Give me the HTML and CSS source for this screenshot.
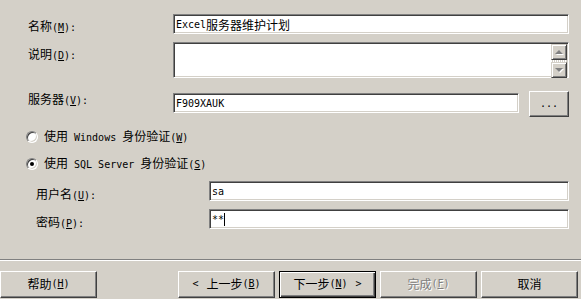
FILE: index.html
```html
<!DOCTYPE html>
<html>
<head>
<meta charset="utf-8">
<link rel="stylesheet" href="styles.css">
</head>
<body>
<div class="dlg">
  <div class="form">
    <div class="row r-name">
      <div class="lbl">名称<span class="m">(<u>M</u>):</span></div>
      <div class="field wide"><span class="m">Excel</span>服务器维护计划</div>
    </div>
    <div class="row r-desc">
      <div class="lbl">说明<span class="m">(<u>D</u>):</span></div>
      <div class="field wide area">
        <div class="sbar">
          <div class="sbtn"><span class="tri up"></span></div>
          <div class="strack"></div>
          <div class="sbtn"><span class="tri down"></span></div>
        </div>
      </div>
    </div>
    <div class="row r-server">
      <div class="lbl">服务器<span class="m">(<u>V</u>):</span></div>
      <div class="field server"><span class="m">F909XAUK</span></div>
      <div class="btn dots"><span class="m">...</span></div>
    </div>
    <div class="radio r-win">
      <span class="rb"></span>
      <span class="rtext">使用<span class="m"> Windows </span>身份验证<span class="m">(<u>W</u>)</span></span>
    </div>
    <div class="radio r-sql">
      <span class="rb on"></span>
      <span class="rtext">使用<span class="m"> SQL Server </span>身份验证<span class="m">(<u>S</u>)</span></span>
    </div>
    <div class="row sub r-user">
      <div class="lbl sublbl">用户名<span class="m">(<u>U</u>):</span></div>
      <div class="field subfield"><span class="m">sa</span></div>
    </div>
    <div class="row sub r-pass">
      <div class="lbl sublbl">密码<span class="m">(<u>P</u>):</span></div>
      <div class="field subfield"><span class="m">**</span><span class="caret"></span></div>
    </div>
  </div>
  <div class="sep"></div>
  <div class="buttons">
    <div class="btn pb help">帮助<span class="m">(<u>H</u>)</span></div>
    <div class="btn pb back"><span class="m lt">&lt;</span>上一步<span class="m">(<u>B</u>)</span></div>
    <div class="btn pb next def">下一步<span class="m">(<u>N</u>)</span><span class="m gt">&gt;</span></div>
    <div class="btn pb dis">完成<span class="m">(<u>F</u>)</span></div>
    <div class="btn pb">取消</div>
  </div>
</div>
</body>
</html>
```

FILE: styles.css
```css
html, body {
  margin: 0;
  padding: 0;
}
body {
  background: #d4d0c8;
  width: 581px;
  height: 299px;
  overflow: hidden;
  font-family: "Noto Sans CJK SC", "DejaVu Sans", sans-serif;
  font-size: 12px;
  color: #000;
}
.m {
  font-family: "DejaVu Sans Mono", monospace;
  font-size: 10px;
}
u {
  text-decoration: underline;
  text-underline-offset: 1px;
}
.dlg {
  display: flex;
  flex-direction: column;
}
.form {
  display: flex;
  flex-direction: column;
  padding: 14px 12px 0 28px;
}
.row {
  display: flex;
  align-items: flex-start;
}
.lbl {
  width: 145px;
  flex: none;
  line-height: 14px;
  white-space: nowrap;
}
.r-name { height: 20px; }
.r-name .lbl { padding-top: 5px; }
.r-desc { height: 36px; margin-top: 8px; }
.r-desc .lbl { padding-top: 5px; }
.r-server { height: 26px; margin-top: 13px; }
.r-server .lbl { padding-top: 1px; }

.field {
  box-sizing: border-box;
  height: 20px;
  background: #fff;
  border: 1px solid;
  border-color: #808080 #fff #fff #808080;
  box-shadow: inset 1px 1px #404040, inset -1px -1px #d4d0c8;
  padding: 1px 2px 0 2px;
  line-height: 16px;
  white-space: nowrap;
  display: flex;
  align-items: center;
}
.wide { flex: 1; }
.area {
  height: 36px;
  position: relative;
}
.server {
  width: 346px;
  margin-top: 2px;
}
.sbar {
  position: absolute;
  right: 1px;
  top: 1px;
  width: 16px;
  height: 34px;
  display: flex;
  flex-direction: column;
  background: #ece9e4;
}
.sbtn {
  box-sizing: border-box;
  width: 16px;
  height: 16px;
  background: #d4d0c8;
  border: 1px solid;
  border-color: #d4d0c8 #404040 #404040 #d4d0c8;
  box-shadow: inset 1px 1px #fff, inset -1px -1px #808080;
  display: flex;
  align-items: center;
  justify-content: center;
}
.strack {
  height: 2px;
  background: repeating-linear-gradient(90deg, #fff 0 1px, #d4d0c8 1px 2px);
}
.tri {
  width: 0;
  height: 0;
  border-left: 4px solid transparent;
  border-right: 4px solid transparent;
}
.tri.up {
  border-bottom: 4px solid #808080;
  filter: drop-shadow(1px 1px 0 #fff);
  margin-bottom: 1px;
}
.tri.down {
  border-top: 4px solid #808080;
  filter: drop-shadow(1px 1px 0 #fff);
}

.btn {
  box-sizing: border-box;
  background: #d4d0c8;
  border: 1px solid;
  border-color: #fff #404040 #404040 #fff;
  box-shadow: inset -1px -1px #808080;
  display: flex;
  align-items: center;
  justify-content: center;
  white-space: nowrap;
}
.dots {
  width: 40px;
  height: 26px;
  margin-left: 10px;
  padding-bottom: 2px;
}

.radio {
  display: flex;
  align-items: center;
  height: 16px;
  margin-left: -2px;
}
.r-win { margin-top: 12px; }
.r-sql { margin-top: 11px; }
.rb {
  box-sizing: border-box;
  width: 12px;
  height: 12px;
  border-radius: 50%;
  background: #fff;
  border: 1px solid;
  border-color: #808080 #fff #fff #808080;
  box-shadow: inset 1px 1px #404040, inset -1px -1px #d4d0c8;
  position: relative;
  flex: none;
}
.rb.on::after {
  content: "";
  position: absolute;
  left: 3px;
  top: 3px;
  width: 4px;
  height: 4px;
  border-radius: 50%;
  background: #000;
}
.rtext {
  margin-left: 6px;
  line-height: 14px;
  white-space: nowrap;
}

.sub { height: 20px; }
.r-user { margin-top: 9px; }
.r-pass { margin-top: 8px; }
.sublbl {
  width: 173px;
  margin-left: 8px;
  padding-top: 6px;
}
.subfield { flex: 1; }
.caret {
  display: inline-block;
  width: 1px;
  height: 13px;
  background: #000;
  margin-left: 0;
}

.sep {
  margin-top: 30px;
  height: 1px;
  border-top: 1px solid #808080;
  background: #fff;
}
.buttons {
  display: flex;
  margin-top: 10px;
  gap: 4px;
}
.pb {
  width: 97px;
  height: 27px;
  padding-bottom: 3px;
}
.help {
  width: 97px;
  margin-right: 77px;
}
.lt { margin-right: 8px; }
.gt { margin-left: 8px; }
.def {
  border: 1px solid #000;
  box-shadow: inset 1px 1px #fff, inset -1px -1px #404040, inset -2px -2px #808080;
}
.dis {
  color: #808080;
  text-shadow: 1px 1px 0 #fff;
}
```
